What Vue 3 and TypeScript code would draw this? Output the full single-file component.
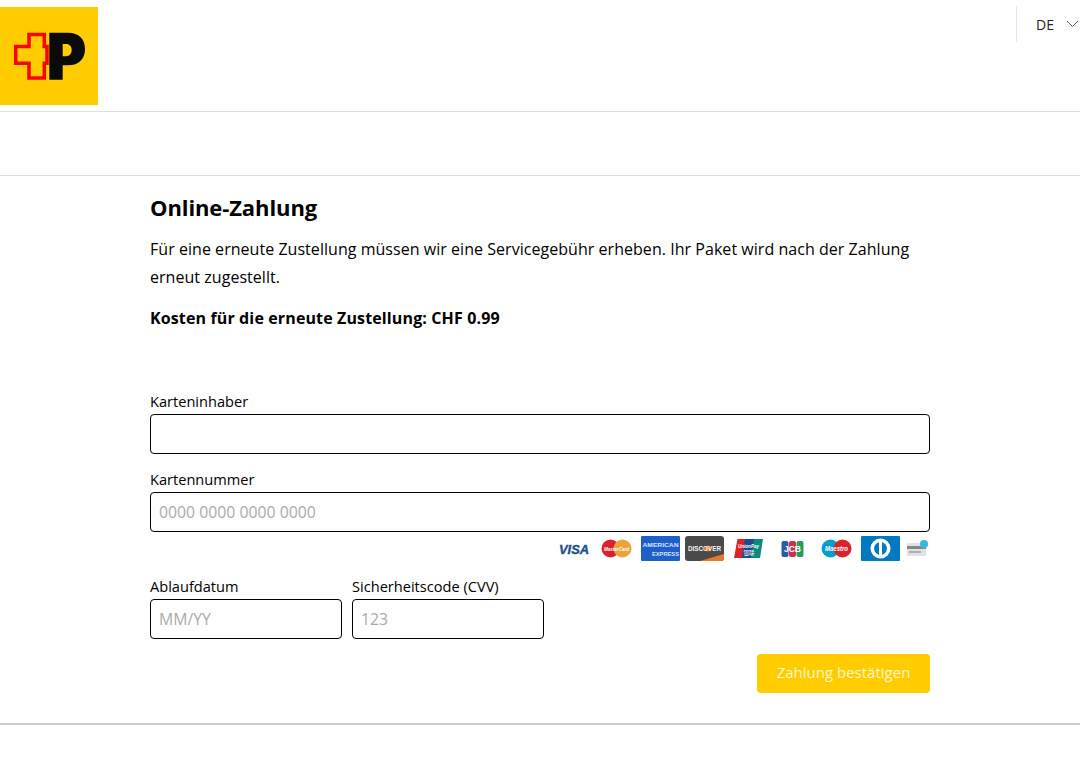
<script setup lang="ts">
const paragraph = 'Für eine erneute Zustellung müssen wir eine Servicegebühr erheben. Ihr Paket wird nach der Zahlung erneut zugestellt.'
</script>

<template>
  <div class="page">
    <header class="top">
      <svg class="logo" viewBox="0 0 98 98" aria-label="Post">
        <rect width="98" height="98" fill="#ffcc00" />
        <path d="M29 27.500H44.300V39.500H47V56.200H44.300V71H29V56.200H15.700V39.500H29Z" fill="#ffcc00" stroke="#f00" stroke-width="3.500" />
        <path d="M49.300 25.700H68c11 0 17 6.500 17 16.300S79 58.300 68 58.300H62.700V72.700H49.300ZM62.700 37V49.300H66c3.500 0 5.700-2.500 5.700-6.200S69.500 37 66 37Z" fill="#0a0a0a" fill-rule="evenodd" />
      </svg>
      <div class="lang">
        <span>DE</span>
        <svg width="13" height="8" viewBox="0 0 13 8"><path d="M1 1l5.500 5.500L12 1" fill="none" stroke="#666" stroke-width="1" /></svg>
      </div>
    </header>
    <div class="nav"></div>
    <main class="main">
      <h1>Online-Zahlung</h1>
      <p class="intro">{{ paragraph }}</p>
      <p class="cost">Kosten für die erneute Zustellung: CHF 0.99</p>
      <form class="form" @submit.prevent>
        <label class="field">
          <span>Karteninhaber</span>
          <input type="text" />
        </label>
        <label class="field second">
          <span>Kartennummer</span>
          <input type="text" placeholder="0000 0000 0000 0000" />
        </label>
        <div class="cards">
          <svg class="visa" width="33" height="25" viewBox="0 0 33 25"><text x="2" y="17.500" textLength="30" lengthAdjust="spacingAndGlyphs" font-family="Liberation Sans" font-size="13.500" font-weight="700" font-style="italic" fill="#1c4f87" stroke="#1c4f87" stroke-width="0.400">VISA</text></svg>
          <svg class="mc" width="31" height="25" viewBox="0 0 31 25"><circle cx="9.500" cy="12.500" r="9" fill="#d9222a" /><circle cx="21.500" cy="12.500" r="9" fill="#e9a33a" /><text x="3" y="14.500" textLength="25" lengthAdjust="spacingAndGlyphs" font-family="Liberation Sans" font-size="4.800" font-weight="700" font-style="italic" fill="#fff">MasterCard</text></svg>
          <svg class="amex" width="39" height="25" viewBox="0 0 39 25"><rect width="39" height="25" rx="1" fill="#1f5fc9" /><text x="1.500" y="11" textLength="36" lengthAdjust="spacingAndGlyphs" font-family="Liberation Sans" font-size="5.500" font-weight="700" fill="#d5e3fa">AMERICAN</text><text x="11" y="20" textLength="27" lengthAdjust="spacingAndGlyphs" font-family="Liberation Sans" font-size="5.500" font-weight="700" fill="#d5e3fa">EXPRESS</text></svg>
          <svg class="disc" width="39" height="25" viewBox="0 0 39 25"><rect width="39" height="25" rx="3" fill="#4a4a4a" /><path d="M15 25L39 18v4a3 3 0 0 1-3 3z" fill="#e8792b" /><circle cx="23" cy="12.500" r="3" fill="#e8792b" /><text x="3" y="15" textLength="33" lengthAdjust="spacingAndGlyphs" font-family="Liberation Sans" font-size="6.500" font-weight="700" fill="#f4f4f4">DISCOVER</text></svg>
          <svg class="up" width="29" height="25" viewBox="0 0 29 25"><path d="M3.500 3H12L9 22H0z" fill="#d8232a" /><path d="M11 3h10l-3 19H8z" fill="#1c4a8f" /><path d="M20 3h9l-3 19h-9z" fill="#0a8a7a" /><text x="4" y="12" textLength="21" lengthAdjust="spacingAndGlyphs" font-family="Liberation Sans" font-size="5.500" font-weight="700" font-style="italic" fill="#fff">UnionPay</text><text x="15" y="19" text-anchor="middle" font-family="Noto Sans CJK SC" font-size="5.500" fill="#fff">银联</text></svg>
          <svg class="jcb" width="23" height="25" viewBox="0 0 23 25"><rect x="0.500" y="5" width="7" height="16" rx="2" fill="#2a5aa8" /><rect x="8" y="5" width="7" height="16" rx="2" fill="#c8314a" /><rect x="15.500" y="5" width="7" height="16" rx="2" fill="#2b9b5a" /><text x="11.500" y="16" text-anchor="middle" font-family="Liberation Sans" font-size="8.500" font-weight="700" fill="#fff">JCB</text></svg>
          <svg class="mae" width="31" height="25" viewBox="0 0 31 25"><circle cx="9.500" cy="12.500" r="9" fill="#0a9bd0" /><circle cx="21.500" cy="12.500" r="9" fill="#d9222a" /><text x="4" y="15" textLength="23" lengthAdjust="spacingAndGlyphs" font-family="Liberation Sans" font-size="6.500" font-weight="700" font-style="italic" fill="#fff">Maestro</text></svg>
          <svg class="din" width="39" height="25" viewBox="0 0 39 25"><rect width="39" height="25" rx="1" fill="#0079be" /><circle cx="19.500" cy="12.500" r="10" fill="#fff" /><circle cx="19.500" cy="12.500" r="6.500" fill="#0079be" /><rect x="18" y="5" width="3" height="15" fill="#fff" /></svg>
          <svg class="cvv" width="21" height="25" viewBox="0 0 21 25"><rect x="0" y="7" width="19" height="13" rx="1" fill="#dfe2df" /><rect x="0" y="10" width="19" height="3" fill="#7d8a88" /><rect x="2" y="15" width="12" height="2" fill="#a8b2b0" /><circle cx="17" cy="8" r="4" fill="#38b6dc" /></svg>
        </div>
        <div class="row">
          <label class="field small">
            <span>Ablaufdatum</span>
            <input type="text" placeholder="MM/YY" />
          </label>
          <label class="field small">
            <span>Sicherheitscode (CVV)</span>
            <input type="text" placeholder="123" />
          </label>
        </div>
        <div class="actions">
          <button type="submit">Zahlung bestätigen</button>
        </div>
      </form>
    </main>
    <div class="rule"></div>
  </div>
</template>

<style>
html, body { margin: 0; background: #fff; }
</style>

<style scoped>
.page {
  font-family: "Open Sans", "Noto Sans", sans-serif;
  font-size: 16px;
  color: #000;
  min-height: 768px;
}
.top {
  height: 111px;
  border-bottom: 1px solid #e0e0e0;
  display: flex;
  justify-content: space-between;
  align-items: flex-start;
}
.logo { width: 98px; height: 98px; margin-top: 7px; display: block; }
.lang {
  margin-top: 6px;
  height: 36px;
  width: 64px;
  box-sizing: border-box;
  border-left: 1px solid #e5e5e5;
  padding-left: 19px;
  display: flex;
  align-items: center;
  gap: 12px;
  font-size: 14px;
  color: #222;
}
.lang svg { flex: none; }
.nav { height: 63px; border-bottom: 1px solid #e0e0e0; }
.main { width: 780px; margin-left: 150px; }
h1 { margin: 16px 0 0; font-size: 22px; line-height: 30px; font-weight: 700; letter-spacing: -0.1px; }
.intro { margin: 13px 0 0; font-size: 16px; line-height: 28px; letter-spacing: 0.04px; }
.cost { margin: 15px 0 0; font-size: 16px; line-height: 24px; font-weight: 700; letter-spacing: 0.13px; }
.form { margin-top: 60px; }
.field { display: flex; flex-direction: column; }
.field span { font-size: 14.600px; line-height: 22px; height: 24px; }
.second { margin-top: 14px; }
input {
  box-sizing: border-box;
  width: 100%;
  height: 40px;
  border: 1px solid #000;
  border-radius: 4px;
  padding: 0 8px;
  font: inherit;
  font-size: 15.800px;
  outline: none;
  background: #fff;
}
input::placeholder { color: #aaa; opacity: 1; }
.cards { display: flex; align-items: center; margin-top: 4px; height: 25px; padding-left: 407px; }
.cards svg { display: block; flex: none; }
.mc { margin-left: 11px; }
.amex { margin-left: 9px; }
.disc { margin-left: 5px; }
.up { margin-left: 10px; }
.jcb { margin-left: 18px; }
.mae { margin-left: 17px; }
.din { margin-left: 9px; }
.cvv { margin-left: 7px; }
.row { display: flex; gap: 10px; margin-top: 14px; }
.small { width: 192px; }
.actions { display: flex; justify-content: flex-end; margin-top: 15px; }
button {
  width: 173px;
  height: 39px;
  border: none;
  border-radius: 4px;
  background: #ffcc00;
  color: #fff6c4;
  font: inherit;
  font-size: 15px;
  padding: 0 0 4px;
}
.rule { margin-top: 30px; height: 2px; background: #ccc; }
</style>
